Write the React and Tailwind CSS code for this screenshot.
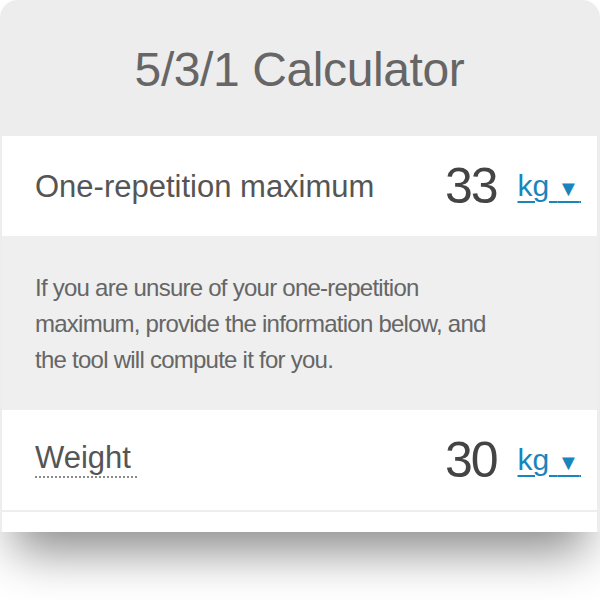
import React, { useState } from "react";

const UnitSelect = ({ unit }) => (
  <button className="ml-[21px] inline-block whitespace-pre text-[30px] leading-none text-[#1a84bd] underline decoration-2 underline-offset-[5px]">
    {unit + "\u00a0"}
    <span className="text-[22px] leading-none">▼</span>
    <span className="text-[6px]">{"\u00a0"}</span>
  </button>
);

const Row = ({ label, value, dotted }) => (
  <div className="flex h-[100px] items-center bg-white pl-[33px] pr-[16px]">
    <span
      className={
        dotted
          ? "border-b-2 border-dotted border-[#8a8a8a] pb-[3px] pr-[6px] text-[31px] leading-none text-[#555]"
          : "text-[31px] leading-none text-[#555]"
      }
    >
      {label}
    </span>
    <span className="ml-auto text-[50px] leading-none tracking-[-2px] text-[#444]">{value}</span>
    <UnitSelect unit="kg" />
  </div>
);

export default function App() {
  const [oneRm] = useState(33);
  const [weight] = useState(30);

  return (
    <div className="h-[600px] w-[600px] bg-white font-['Liberation_Sans',Arial,sans-serif]">
      <div className="flex h-[532px] flex-col overflow-hidden rounded-t-[18px] bg-[#ededed] pl-[2px] pr-[3px] shadow-[0_34px_48px_-14px_rgba(0,0,0,0.45)]">
        <h1 className="flex h-[136px] shrink-0 items-center justify-center pt-[4px] text-[48px] tracking-[-0.4px] text-[#666]">
          5/3/1 Calculator
        </h1>
        <Row label="One-repetition maximum" value={oneRm} />
        <div className="h-[174px] bg-[#efefef] pl-[33px] pr-[100px] pt-[34px] text-[24px] leading-[36px] tracking-[-0.75px] text-[#666]">
          If you are unsure of your one-repetition maximum, provide the information below, and the tool will compute it for you.
        </div>
        <Row label="Weight" value={weight} dotted />
        <div className="h-[2px] bg-[#eee]" />
        <div className="flex-1 bg-white" />
      </div>
    </div>
  );
}
